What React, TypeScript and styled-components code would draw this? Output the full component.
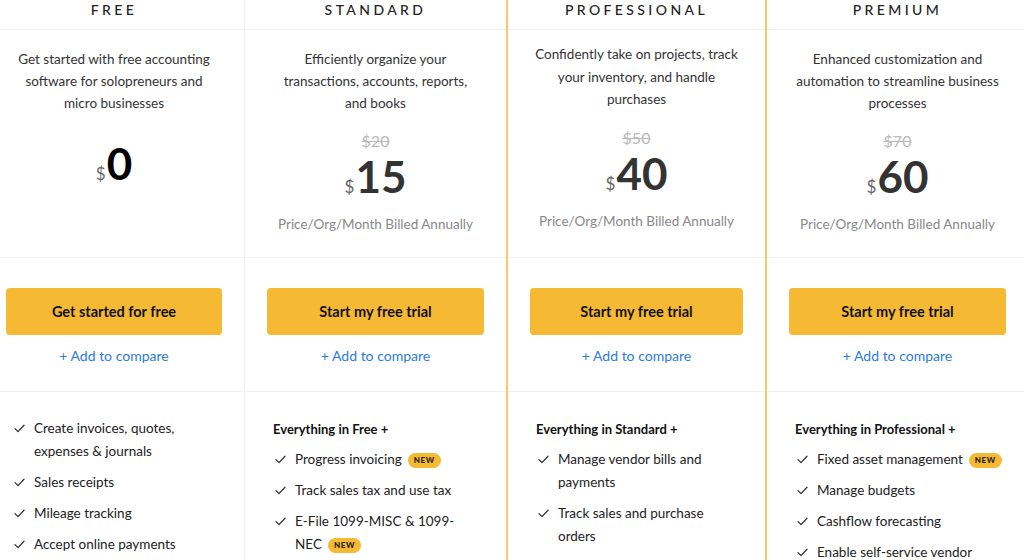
import styled, { createGlobalStyle } from 'styled-components';

const GlobalStyle = createGlobalStyle`
  * { box-sizing: border-box; }
  body {
    margin: 0;
    background: #ffffff;
    font-family: Lato, "Noto Sans", sans-serif;
    color: #222;
    overflow: hidden;
  }
`;

const Board = styled.div`
  display: grid;
  grid-template-columns: repeat(4, 261px);
  margin-left: -16px;
  width: 1044px;
  height: 560px;
`;

const Column = styled.div<{ $featured?: boolean; $divider?: boolean }>`
  display: flex;
  flex-direction: column;
  border-left: ${(p) => (p.$featured ? '2px solid #f6c869' : 'none')};
  border-right: ${(p) =>
    p.$featured ? '2px solid #f6c869' : p.$divider ? '1px solid #eef0f5' : 'none'};
`;

const Header = styled.div`
  height: 30px;
  flex: none;
  display: flex;
  align-items: center;
  justify-content: center;
  padding-bottom: 10px;
  font-size: 14px;
  font-weight: 500;
  letter-spacing: 3.4px;
  color: #222;
  border-bottom: 1px solid #eef0f5;
`;

const Summary = styled.div<{ $featured?: boolean }>`
  height: 228px;
  flex: none;
  display: flex;
  flex-direction: column;
  align-items: center;
  padding: ${(p) => (p.$featured ? '13px' : '18px')} 27px 0;
  border-bottom: 1px solid #eef0f5;
  text-align: center;
`;

const Description = styled.p<{ $featured?: boolean }>`
  margin: 0;
  font-size: 13.5px;
  line-height: ${(p) => (p.$featured ? '22.5px' : '22px')};
  color: #333;
`;

const OldPrice = styled.div`
  margin-top: 17px;
  font-size: 16px;
  line-height: 20px;
  color: #b9b9b9;
  text-decoration: line-through;
`;

const Price = styled.div<{ $free?: boolean }>`
  margin-top: ${(p) => (p.$free ? '26px' : '2px')};
  display: flex;
  align-items: baseline;
  line-height: 46px;
  font-size: 44px;
  font-weight: 700;
  color: ${(p) => (p.$free ? '#000' : '#333')};
`;

const Currency = styled.span`
  font-size: 17px;
  font-weight: 400;
  color: #666;
  margin-right: 1px;
`;

const Billing = styled.div`
  margin-top: 4px;
  font-size: 13.5px;
  line-height: 20px;
  color: #888;
`;

const Cta = styled.div`
  height: 134px;
  flex: none;
  display: flex;
  flex-direction: column;
  align-items: center;
  padding: 30px 22px 0;
  border-bottom: 1px solid #eef0f5;
`;

const Button = styled.button`
  width: 100%;
  height: 47px;
  flex: none;
  border: none;
  border-radius: 4px;
  background: #f5b933;
  font-family: Lato, "Noto Sans", sans-serif;
  font-size: 14.5px;
  font-weight: 700;
  color: #111;
  cursor: pointer;
`;

const CompareLink = styled.a`
  margin-top: 11px;
  font-size: 14px;
  line-height: 20px;
  color: #2b7be0;
  text-decoration: none;
  cursor: pointer;
`;

const Features = styled.div`
  padding: 25px 26px 0 28px;
`;

const FeatureHeading = styled.div`
  font-size: 13px;
  line-height: 24px;
  font-weight: 700;
  color: #111;
  margin-bottom: 7px;
`;

const FeatureList = styled.ul`
  list-style: none;
  margin: 0;
  padding: 0;
  display: flex;
  flex-direction: column;
  gap: 8px;
`;

const FeatureItem = styled.li`
  display: flex;
  align-items: flex-start;
  font-size: 13.5px;
  line-height: 23px;
  color: #222;
`;

const CheckMark = styled.span`
  flex: none;
  width: 22px;
  height: 23px;
  display: flex;
  align-items: center;
  padding-left: 2px;
`;

const NoWrap = styled.span`
  white-space: nowrap;
`;

const Badge = styled.span`
  display: inline-block;
  margin-left: 6px;
  padding: 0 6px;
  height: 15px;
  line-height: 15px;
  border-radius: 8px;
  background: #f5b933;
  font-size: 8px;
  font-weight: 900;
  letter-spacing: 0.6px;
  color: #222;
  vertical-align: 1px;
`;

const Check = () => (
  <svg width="11" height="9" viewBox="0 0 11 9" fill="none">
    <path d="M1 4.6 L4 7.6 L10 1.2" stroke="#333" strokeWidth="1.3" strokeLinecap="round" strokeLinejoin="round" />
  </svg>
);

interface Feature {
  text: string;
  isNew?: boolean;
}

interface Plan {
  name: string;
  description: string;
  oldPrice?: string;
  price: string;
  cta: string;
  heading?: string;
  features: Feature[];
  featured?: boolean;
}

const plans: Plan[] = [
  {
    name: 'FREE',
    description: 'Get started with free accounting software for solopreneurs and micro businesses',
    price: '0',
    cta: 'Get started for free',
    features: [
      { text: 'Create invoices, quotes, expenses & journals' },
      { text: 'Sales receipts' },
      { text: 'Mileage tracking' },
      { text: 'Accept online payments' },
    ],
  },
  {
    name: 'STANDARD',
    description: 'Efficiently organize your transactions, accounts, reports, and books',
    oldPrice: '$20',
    price: '15',
    cta: 'Start my free trial',
    heading: 'Everything in Free +',
    features: [
      { text: 'Progress invoicing', isNew: true },
      { text: 'Track sales tax and use tax' },
      { text: 'E-File 1099-MISC & 1099-NEC', isNew: true },
    ],
  },
  {
    name: 'PROFESSIONAL',
    description: 'Confidently take on projects, track your inventory, and handle purchases',
    oldPrice: '$50',
    price: '40',
    cta: 'Start my free trial',
    heading: 'Everything in Standard +',
    featured: true,
    features: [
      { text: 'Manage vendor bills and payments' },
      { text: 'Track sales and purchase orders' },
    ],
  },
  {
    name: 'PREMIUM',
    description: 'Enhanced customization and automation to streamline business processes',
    oldPrice: '$70',
    price: '60',
    cta: 'Start my free trial',
    heading: 'Everything in Professional +',
    features: [
      { text: 'Fixed asset management', isNew: true },
      { text: 'Manage budgets' },
      { text: 'Cashflow forecasting' },
      { text: 'Enable self-service vendor portal' },
    ],
  },
];

// keeps the last word (after a space or hyphen) glued to the NEW badge
const FeatureText = ({ feature }: { feature: Feature }) => {
  if (!feature.isNew) return <span>{feature.text}</span>;
  const cut = Math.max(feature.text.lastIndexOf(' '), feature.text.lastIndexOf('-'));
  const head = feature.text.slice(0, cut + 1);
  const last = feature.text.slice(cut + 1);
  return (
    <span>
      {head}
      <NoWrap>
        {last}
        <Badge>NEW</Badge>
      </NoWrap>
    </span>
  );
};

const App = () => {
  return (
    <>
      <GlobalStyle />
      <Board>
        {plans.map((plan, i) => (
          <Column key={plan.name} $featured={plan.featured} $divider={i === 0}>
            <Header>{plan.name}</Header>
            <Summary $featured={plan.featured}>
              <Description $featured={plan.featured}>{plan.description}</Description>
              {plan.oldPrice && <OldPrice>{plan.oldPrice}</OldPrice>}
              <Price $free={!plan.oldPrice}>
                <Currency>$</Currency>
                {plan.price}
              </Price>
              {plan.oldPrice && <Billing>Price/Org/Month Billed Annually</Billing>}
            </Summary>
            <Cta>
              <Button>{plan.cta}</Button>
              <CompareLink>+ Add to compare</CompareLink>
            </Cta>
            <Features>
              {plan.heading && <FeatureHeading>{plan.heading}</FeatureHeading>}
              <FeatureList>
                {plan.features.map((f) => (
                  <FeatureItem key={f.text}>
                    <CheckMark>
                      <Check />
                    </CheckMark>
                    <FeatureText feature={f} />
                  </FeatureItem>
                ))}
              </FeatureList>
            </Features>
          </Column>
        ))}
      </Board>
    </>
  );
};

export default App;
